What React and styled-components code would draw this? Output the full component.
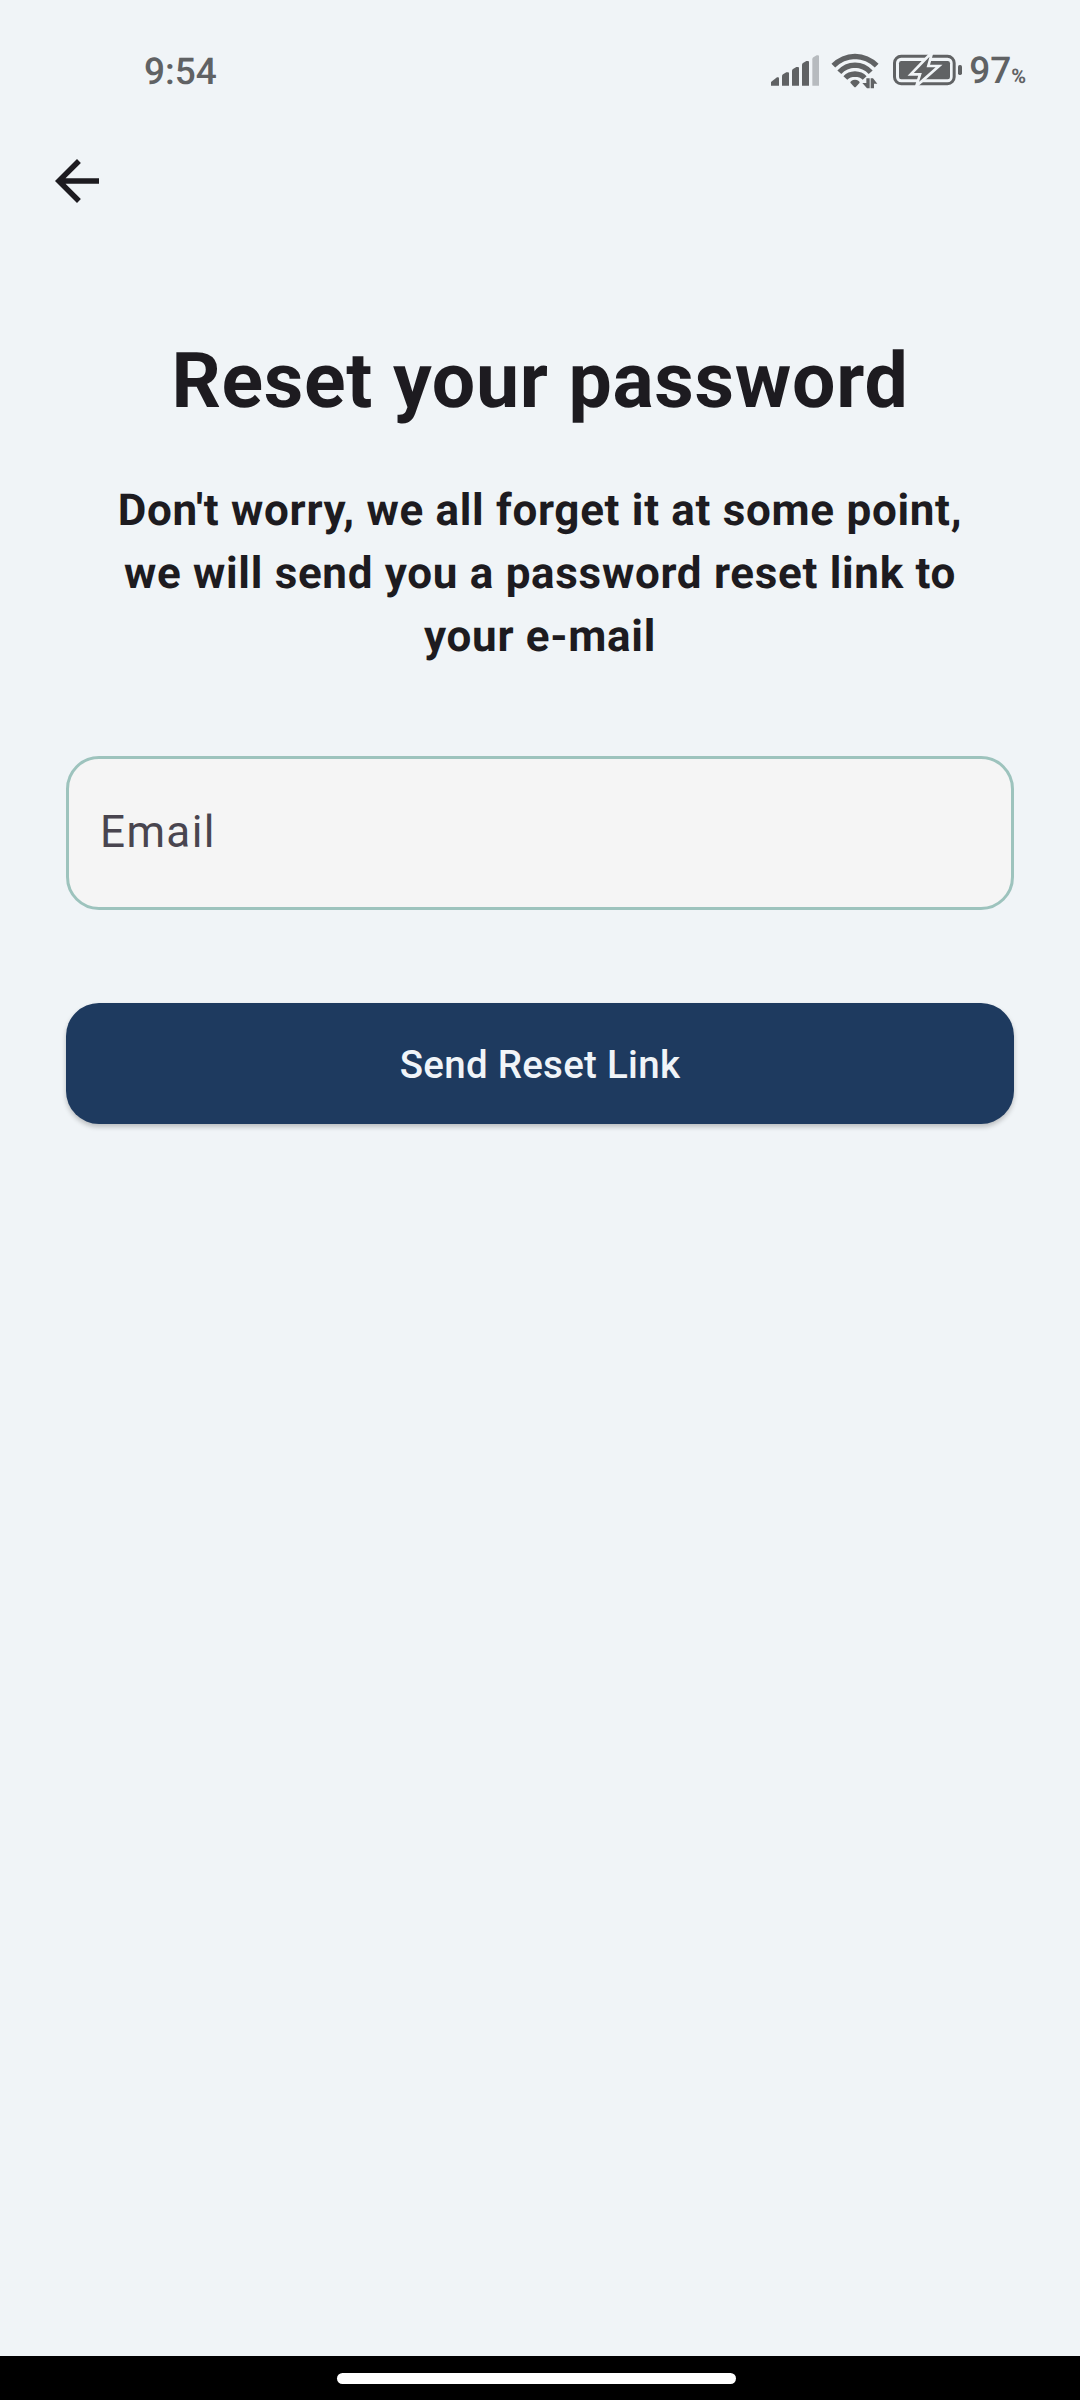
import React from "react";
import styled, { createGlobalStyle } from "styled-components";

const GlobalStyle = createGlobalStyle`
  *, *::before, *::after { box-sizing: border-box; }
  html, body { margin: 0; padding: 0; background: #f0f4f7; }
  body {
    font-family: Roboto, "Noto Sans", sans-serif;
    text-rendering: geometricPrecision;
    -webkit-font-smoothing: antialiased;
  }
`;

const Screen = styled.div`
  display: flex;
  flex-direction: column;
  width: 1080px;
  height: 2400px;
  overflow: hidden;
  background: #f0f4f7;
  color: #1d1b20;
`;

const StatusBar = styled.header`
  display: flex;
  align-items: center;
  justify-content: space-between;
  height: 142px;
  padding: 0 54px 0 144px;
  color: #606264;
`;

const Clock = styled.time`
  padding-top: 3px;
  font-size: 37px;
  font-weight: 500;
  line-height: 44px;
`;

const StatusIcons = styled.div`
  display: flex;
  align-items: center;
`;

const StatusGlyph = styled.svg`
  display: block;
  flex: none;
  height: 60px;
  margin-bottom: 2px;
  width: ${(p) => p.$width}px;
`;

const Charge = styled.span`
  display: flex;
  align-items: baseline;
  padding-top: 6px;
  font-size: 37px;
  font-weight: 500;
  line-height: 44px;
`;

const Percent = styled.small`
  font-size: 20px;
  font-weight: 700;
`;

const AppBar = styled.nav`
  display: flex;
  align-items: center;
  height: 78px;
  padding-left: 44px;
`;

const BackButton = styled.button`
  display: block;
  width: 66px;
  height: 66px;
  padding: 0;
  border: 0;
  background: none;
  color: #1d1b20;

  svg { display: block; width: 66px; height: 66px; }
`;

const Content = styled.main`
  flex: 1;
  display: flex;
  flex-direction: column;
  padding: 111px 66px 0;
`;

const Title = styled.h1`
  margin: 0;
  font-size: 77px;
  font-weight: 700;
  line-height: 100px;
  letter-spacing: 0.6875px;
  text-align: center;
`;

const Lead = styled.p`
  margin: 48px 0 0;
  font-size: 44px;
  font-weight: 700;
  line-height: 63px;
  letter-spacing: 0.6875px;
  text-align: center;
`;

const Field = styled.label`
  display: flex;
  align-items: center;
  height: 154px;
  margin-top: 88px;
  padding: 0 31px 2px;
  border: 3px solid #9dc3bd;
  border-radius: 33px;
  background: #f5f5f5;
`;

const EmailInput = styled.input`
  flex: 1;
  height: 66px;
  padding: 0;
  border: 0;
  outline: 0;
  background: none;
  font: 400 44px/66px Roboto, "Noto Sans", sans-serif;
  letter-spacing: 1.375px;

  &::placeholder { color: #49454f; opacity: 1; }
`;

const SubmitButton = styled.button`
  height: 121px;
  margin-top: 93px;
  padding: 1px 0 0;
  border: 0;
  border-radius: 33px;
  background: #1e3a5f;
  color: #f0f4f8;
  font: 500 38.5px/55px Roboto, "Noto Sans", sans-serif;
  letter-spacing: 0.275px;
  box-shadow: 0 3px 5px rgba(0, 0, 0, 0.22);
`;

const NavigationBar = styled.footer`
  display: flex;
  justify-content: center;
  height: 44px;
  padding: 17px 7px 0 0;
  background: #000;
`;

const HomeHandle = styled.div`
  width: 399px;
  height: 11px;
  border-radius: 6px;
  background: #fff;
`;

function SignalIcon() {
  return (
    <StatusGlyph $width={66} viewBox="0 0 198 180" fill="currentColor">
      <path d="M33 137v-11l18-14h3q3 0 3 3v22z" />
      <path d="M66 137v-28q0-4 3-6l10-6h5q3 0 3 3v37z" />
      <path d="M96 137V93q0-4 3-6l10-6h5q3 0 3 3v53z" />
      <path d="M126 137V75q0-4 3-6l10-6h5q3 0 3 3v71z" />
      <path d="M157 137V58q0-4 3-6l10-6h4q3 0 3 3v88z" fill="#b7bbbf" />
    </StatusGlyph>
  );
}

function WifiIcon() {
  return (
    <StatusGlyph $width={54} viewBox="198 0 162 180" fill="none" stroke="currentColor" strokeWidth="16">
      <path d="M220 77Q247 50 285 49Q323 50 350 77" />
      <path d="M238 97Q257 76 285 75.500Q313 76 332 97" />
      <path d="M256 114Q267 102.500 285 102Q303 102.500 314 114" />
      <path d="M271 128Q272 120 285 119Q298 120 299 128L288 140Q285 143 282 140z" fill="currentColor" stroke="none" />
      <path d="M329 115V145H321L307 129H319V115zM332 145V115H339L352 131H342V145z" fill="currentColor" stroke="none" />
    </StatusGlyph>
  );
}

function BatteryIcon() {
  return (
    <StatusGlyph $width={89} viewBox="0 0 267 180" fill="currentColor">
      <rect x="43.5" y="49" width="179" height="82" rx="20" fill="none" stroke="currentColor" strokeWidth="9" />
      <rect x="57" y="63" width="153" height="55" rx="7" />
      <rect x="234" y="75" width="12" height="30" rx="5" />
      <path
        d="M151 42L92 103H120L109 138L177 78H145L155 42z"
        stroke="#f0f4f7"
        strokeWidth="8"
      />
    </StatusGlyph>
  );
}

export default function App() {
  return (
    <>
      <GlobalStyle />
      <Screen>
        <StatusBar>
          <Clock>9:54</Clock>
          <StatusIcons>
            <SignalIcon />
            <WifiIcon />
            <BatteryIcon />
            <Charge>
              97<Percent>%</Percent>
            </Charge>
          </StatusIcons>
        </StatusBar>
        <AppBar>
          <BackButton aria-label="Back">
            <svg viewBox="0 0 24 24" fill="currentColor">
              <path d="M20 11H7.83l5.59-5.59L12 4l-8 8 8 8 1.41-1.41L7.83 13H20v-2z" />
            </svg>
          </BackButton>
        </AppBar>
        <Content>
          <Title>Reset your password</Title>
          <Lead>
            Don't worry, we all forget it at some point,
            <br />
            we will send you a password reset link to
            <br />
            your e-mail
          </Lead>
          <Field>
            <EmailInput type="email" placeholder="Email" />
          </Field>
          <SubmitButton>Send Reset Link</SubmitButton>
        </Content>
        <NavigationBar>
          <HomeHandle />
        </NavigationBar>
      </Screen>
    </>
  );
}
